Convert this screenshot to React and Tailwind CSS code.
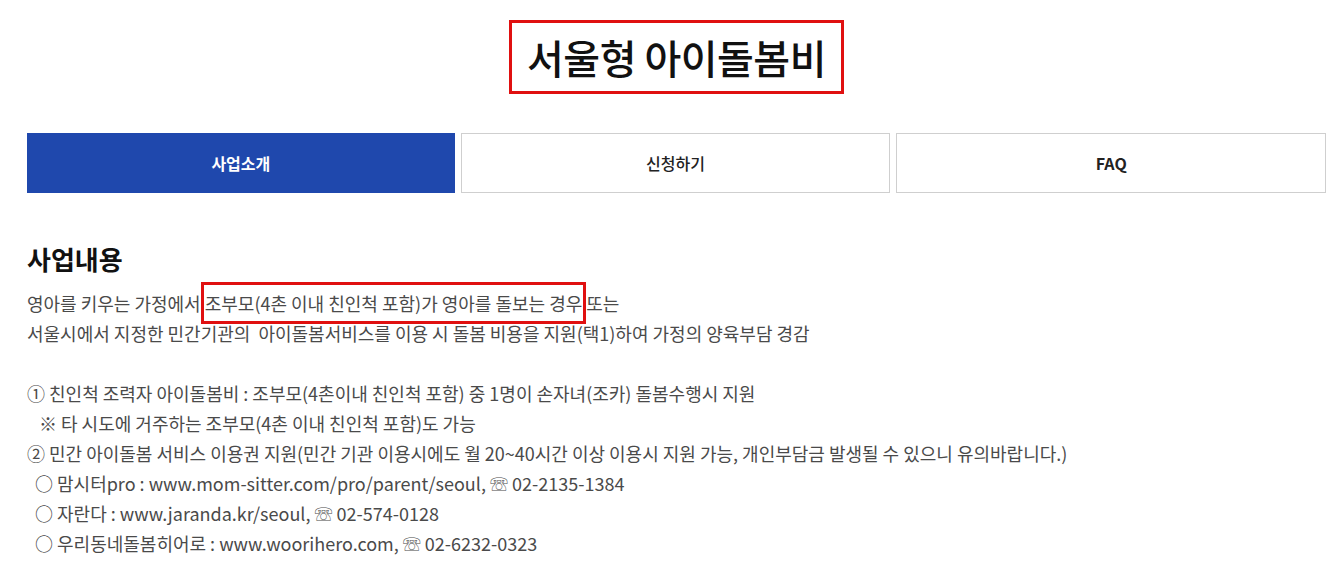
export default function App() {
  const font = { fontFamily: '"Noto Sans CJK KR", "Noto Sans", sans-serif' };
  return (
    <div className="w-[1341px] h-[567px] bg-white overflow-hidden pl-[27px] pr-[15px] pt-[20px]" style={font}>
      <div className="flex justify-center">
        <div className="border-[3px] border-[#e01010] h-[74px] px-[15px] flex items-center">
          <h1 className="text-[40px] font-medium text-[#111] leading-none tracking-[-0.5px]">서울형 아이돌봄비</h1>
        </div>
      </div>
      <div className="mt-[39px] flex gap-[6px]">
        <div className="flex-1 h-[60px] bg-[#1f48ad] flex items-center justify-center text-white text-[16px] font-bold">사업소개</div>
        <div className="flex-1 h-[60px] border border-[#cfcfcf] flex items-center justify-center text-[#222] text-[16px] font-medium">신청하기</div>
        <div className="flex-1 h-[60px] border border-[#cfcfcf] flex items-center justify-center text-[#222] text-[16px] font-bold">FAQ</div>
      </div>
      <h2 className="mt-[50px] text-[26px] leading-[32px] font-bold text-[#111]">사업내용</h2>
      <div className="mt-[13px] text-[18px] leading-[30px] text-[#4a4a4a]">
        <p>
          영아를 키우는 가정에서{" "}
          <span className="border-[3px] border-[#e01010] pl-[1px] pr-[1px] py-[5px] -ml-[4px]">조부모(4촌 이내 친인척 포함)가 영아를 돌보는 경우</span>또는
        </p>
        <p>서울시에서 지정한 민간기관의&nbsp; 아이돌봄서비스를 이용 시 돌봄 비용을 지원(택1)하여 가정의 양육부담 경감</p>
        <p>&nbsp;</p>
        <p>① 친인척 조력자 아이돌봄비 : 조부모(4촌이내 친인척 포함) 중 1명이 손자녀(조카) 돌봄수행시 지원</p>
        <p className="pl-[12px]">※ 타 시도에 거주하는 조부모(4촌 이내 친인척 포함)도 가능</p>
        <p>② 민간 아이돌봄 서비스 이용권 지원(민간 기관 이용시에도 월 20~40시간 이상 이용시 지원 가능, 개인부담금 발생될 수 있으니 유의바랍니다.)</p>
        <p className="pl-[8px]">○ 맘시터pro : www.mom-sitter.com/pro/parent/seoul, ☏ 02-2135-1384</p>
        <p className="pl-[8px]">○ 자란다 : www.jaranda.kr/seoul, ☏ 02-574-0128</p>
        <p className="pl-[8px]">○ 우리동네돌봄히어로 : www.woorihero.com, ☏ 02-6232-0323</p>
      </div>
    </div>
  );
}
